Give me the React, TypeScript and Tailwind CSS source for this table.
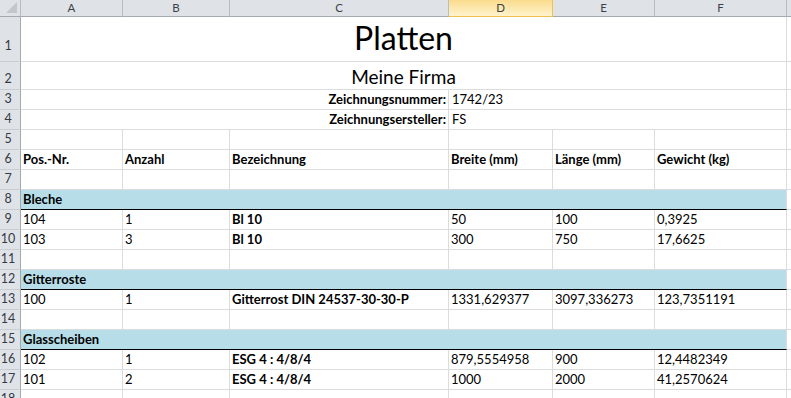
import React from "react";

const GRID_LINE = "border-r border-b border-[#dadcdd]";
const FONT = "font-['Lato','Noto_Sans',sans-serif]";

type CellProps = {
  children?: React.ReactNode;
  bold?: boolean;
  className?: string;
};

function Cell({ children, bold, className = "" }: CellProps) {
  return (
    <div
      className={`flex items-end overflow-hidden whitespace-nowrap bg-white px-[2px] pb-[2px] text-[13px] leading-[16px] text-black ${GRID_LINE} ${
        bold ? "font-bold" : ""
      } ${className}`}
    >
      {children}
    </div>
  );
}

function ColHead({ label, selected }: { label: string; selected?: boolean }) {
  return (
    <div
      className={
        selected
          ? "flex items-center justify-center border-r border-b border-[#f0c14f] bg-gradient-to-b from-[#fbdc8c] to-[#fff3cc] text-[11.5px] leading-none text-[#3b3f46]"
          : "flex items-center justify-center border-r border-b border-r-[#b8bcc3] border-b-[#a4a9b0] bg-[#dfe3e8] text-[11.5px] leading-none text-[#3b3f46]"
      }
    >
      {label}
    </div>
  );
}

function RowHead({ n, className = "" }: { n: number; className?: string }) {
  return (
    <div
      className={`flex items-end justify-center border-r border-b border-r-[#a4a9b0] border-b-[#c9cdd2] bg-[#dfe3e8] pr-[4px] pb-[2px] text-[12.5px] leading-[16px] text-[#333a44] ${className}`}
    >
      {n}
    </div>
  );
}

function Section({ n, title }: { n: number; title: string }) {
  return (
    <>
      <RowHead n={n} />
      <div className="col-span-6 flex items-end border-r border-r-[#dadcdd] border-b border-b-black bg-[#b7dee8] px-[2px] pb-[2px] text-[13px] font-bold leading-[16px] text-black">
        {title}
      </div>
      <Cell />
    </>
  );
}

type Row = [string, string, string, string, string, string];

function DataRow({ n, cells, header }: { n: number; cells: Row; header?: boolean }) {
  return (
    <>
      <RowHead n={n} />
      <Cell bold={header}>{cells[0]}</Cell>
      <Cell bold={header}>{cells[1]}</Cell>
      <Cell bold>{cells[2]}</Cell>
      <Cell bold={header}>{cells[3]}</Cell>
      <Cell bold={header}>{cells[4]}</Cell>
      <Cell bold={header}>{cells[5]}</Cell>
      <Cell />
    </>
  );
}

const EMPTY: Row = ["", "", "", "", "", ""];

export default function App() {
  return (
    <div className={`h-[398px] w-[791px] overflow-hidden bg-white ${FONT}`}>
      <div className="grid grid-cols-[21px_102px_107px_219px_104px_102px_132px_1fr] grid-rows-[17px_45px_28px_repeat(16,20px)]">
        {/* column headers */}
        <div className="relative border-r border-b border-r-[#b8bcc3] border-b-[#a4a9b0] bg-[#dfe3e8]">
          <svg className="absolute right-[3px] bottom-[3px]" width="11" height="11" viewBox="0 0 11 11">
            <polygon points="11,0 11,11 0,11" fill="#c3c7cc" />
          </svg>
        </div>
        <ColHead label="A" />
        <ColHead label="B" />
        <ColHead label="C" />
        <ColHead label="D" selected />
        <ColHead label="E" />
        <ColHead label="F" />
        <ColHead label="" />

        {/* row 1: title */}
        <RowHead n={1} className="pb-[7px]" />
        <div className={`col-span-6 flex items-end justify-center bg-white pb-[5px] text-[32px] leading-[37px] text-black ${GRID_LINE}`}>
          Platten
        </div>
        <Cell />

        {/* row 2: company */}
        <RowHead n={2} />
        <div className={`col-span-6 flex items-end justify-center bg-white pb-[1px] text-[19px] leading-[23px] text-black ${GRID_LINE}`}>
          Meine Firma
        </div>
        <Cell />

        {/* rows 3-4: drawing info */}
        <RowHead n={3} />
        <Cell bold className="col-span-3 justify-end">
          Zeichnungsnummer:
        </Cell>
        <Cell className="col-span-3 pl-[3px]">1742/23</Cell>
        <Cell />

        <RowHead n={4} />
        <Cell bold className="col-span-3 justify-end">
          Zeichnungsersteller:
        </Cell>
        <Cell className="col-span-3 pl-[3px]">FS</Cell>
        <Cell />

        <DataRow n={5} cells={EMPTY} />
        <DataRow
          n={6}
          header
          cells={["Pos.-Nr.", "Anzahl", "Bezeichnung", "Breite (mm)", "Länge (mm)", "Gewicht (kg)"]}
        />
        <DataRow n={7} cells={EMPTY} />

        <Section n={8} title="Bleche" />
        <DataRow n={9} cells={["104", "1", "Bl 10", "50", "100", "0,3925"]} />
        <DataRow n={10} cells={["103", "3", "Bl 10", "300", "750", "17,6625"]} />
        <DataRow n={11} cells={EMPTY} />

        <Section n={12} title="Gitterroste" />
        <DataRow
          n={13}
          cells={["100", "1", "Gitterrost DIN 24537-30-30-P", "1331,629377", "3097,336273", "123,7351191"]}
        />
        <DataRow n={14} cells={EMPTY} />

        <Section n={15} title="Glasscheiben" />
        <DataRow n={16} cells={["102", "1", "ESG 4 : 4/8/4", "879,5554958", "900", "12,4482349"]} />
        <DataRow n={17} cells={["101", "2", "ESG 4 : 4/8/4", "1000", "2000", "41,2570624"]} />
        <DataRow n={18} cells={EMPTY} />
      </div>
    </div>
  );
}
